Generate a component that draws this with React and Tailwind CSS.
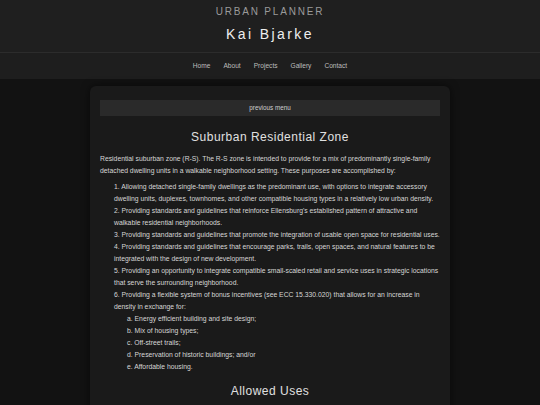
export default function App() {
  const items = [
    "Allowing detached single-family dwellings as the predominant use, with options to integrate accessory dwelling units, duplexes, townhomes, and other compatible housing types in a relatively low urban density.",
    "Providing standards and guidelines that reinforce Ellensburg's established pattern of attractive and walkable residential neighborhoods.",
    "Providing standards and guidelines that promote the integration of usable open space for residential uses.",
    "Providing standards and guidelines that encourage parks, trails, open spaces, and natural features to be integrated with the design of new development.",
    "Providing an opportunity to integrate compatible small-scaled retail and service uses in strategic locations that serve the surrounding neighborhood.",
  ];
  const sub = [
    "Energy efficient building and site design;",
    "Mix of housing types;",
    "Off-street trails;",
    "Preservation of historic buildings; and/or",
    "Affordable housing.",
  ];
  return (
    <div className="min-h-[405px] bg-[#121212] font-['Liberation_Sans',Arial,sans-serif] overflow-hidden">
      <header className="bg-[#1f1f1f] h-[52px] flex flex-col items-center pt-[5px]">
        <div className="text-[10px] leading-[14px] tracking-[1.8px] text-[#9a9a9a]">URBAN PLANNER</div>
        <div className="text-[14px] leading-[18px] tracking-[2.4px] text-[#eeeeee] mt-[6px]">Kai Bjarke</div>
      </header>
      <nav className="bg-[#1e1e1e] border-t border-[#2c2c2c] h-[27px] flex items-center justify-center gap-[13px] text-[6.6px] text-[#bdbdbd]">
        <span>Home</span>
        <span>About</span>
        <span>Projects</span>
        <span>Gallery</span>
        <span>Contact</span>
      </nav>
      <main className="w-[360px] mx-auto mt-[7px] bg-[#1a1a1a] rounded-[6px] shadow-[0_0_8px_rgba(0,0,0,0.6)] px-[10px] pt-[14px] pb-[20px] text-[#d6d6d6]">
        <div className="bg-[#2a2a2a] h-[16px] flex items-center justify-center text-[6.3px] text-[#d0d0d0]">previous menu</div>
        <h1 className="text-center text-[12px] leading-[18px] tracking-[0.5px] text-[#e0e0e0] mt-[12px] mb-[7px]">Suburban Residential Zone</h1>
        <p className="text-[6.8px] leading-[12px]">
          Residential suburban zone (R-S). The R-S zone is intended to provide for a mix of predominantly single-family detached dwelling units in a walkable neighborhood setting. These purposes are accomplished by:
        </p>
        <ol className="mt-[4px] pl-[14px] text-[6.8px] leading-[12px]">
          {items.map((t, i) => (
            <li key={i}>{i + 1}. {t}</li>
          ))}
          <li>
            6. Providing a flexible system of bonus incentives (see ECC 15.330.020) that allows for an increase in density in exchange for:
            <ul className="pl-[13px]">
              {sub.map((t, i) => (
                <li key={i}>{"abcde"[i]}. {t}</li>
              ))}
            </ul>
          </li>
        </ol>
        <h2 className="text-center text-[12px] leading-[18px] tracking-[0.5px] text-[#e0e0e0] mt-[9px]">Allowed Uses</h2>
      </main>
    </div>
  );
}
